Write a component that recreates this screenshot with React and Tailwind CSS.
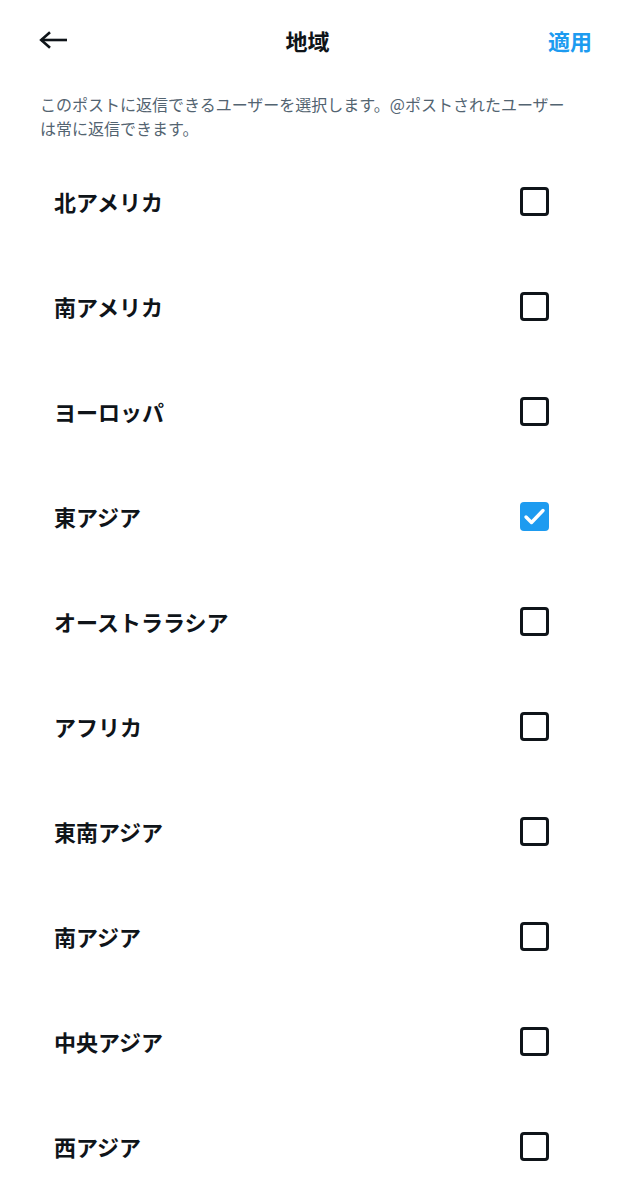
import React, { useState } from "react";

const regions = [
  "北アメリカ",
  "南アメリカ",
  "ヨーロッパ",
  "東アジア",
  "オーストララシア",
  "アフリカ",
  "東南アジア",
  "南アジア",
  "中央アジア",
  "西アジア",
];

const font = { fontFamily: '"Noto Sans CJK JP", "Noto Sans", sans-serif' };

export default function App() {
  const [checked, setChecked] = useState({ "東アジア": true });
  const toggle = (r) => setChecked((c) => ({ ...c, [r]: !c[r] }));

  return (
    <div className="w-[626px] min-h-[1200px] bg-white text-[#0f1419]" style={font}>
      <div className="h-[80px] flex items-center justify-between pl-[39px] pr-[34px]">
        <button className="w-[28px] h-[18px]">
          <svg width="28" height="18" viewBox="0 0 28 18" fill="none" stroke="#0f1419" strokeWidth="2.6" strokeLinecap="butt" strokeLinejoin="miter">
            <path d="M2 9H28" />
            <path d="M11 1.2L2.2 9L11 16.8" />
          </svg>
        </button>
        <div className="text-[22px] font-bold leading-none">地域</div>
        <button className="text-[22px] font-bold leading-none text-[#1d9bf0]">適用</button>
      </div>

      <p className="mt-[12px] px-10 text-[16px] leading-[24px] text-[#536471]">
        このポストに返信できるユーザーを選択します。@ポストされたユーザー
        <br />
        は常に返信できます。
      </p>

      <div className="mt-[9px]">
        {regions.map((r) => (
          <div
            key={r}
            onClick={() => toggle(r)}
            className="h-[105px] flex items-center justify-between pl-[54px] pr-[77px] cursor-pointer"
          >
            <span className="text-[22px] font-bold">{r}</span>
            {checked[r] ? (
              <span className="w-[29px] h-[29px] rounded-[4px] bg-[#1d9bf0] flex items-center justify-center">
                <svg width="29" height="29" viewBox="0 0 29 29" fill="none" stroke="white" strokeWidth="3.4" strokeLinecap="round" strokeLinejoin="round">
                  <path d="M6 15L11.5 20.5L23 8.5" />
                </svg>
              </span>
            ) : (
              <span className="w-[29px] h-[29px] rounded-[4px] border-[3px] border-[#0f1419]" />
            )}
          </div>
        ))}
      </div>
    </div>
  );
}
